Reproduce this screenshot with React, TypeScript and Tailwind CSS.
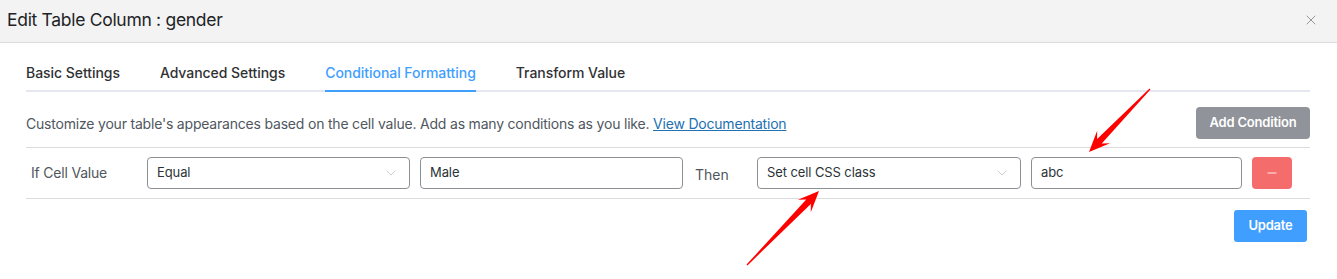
import { X, ChevronDown, Minus } from "lucide-react";

const tabs = ["Basic Settings", "Advanced Settings", "Conditional Formatting", "Transform Value"];

function arrowPoints(tail: [number, number], tip: [number, number]) {
  const dx = tip[0] - tail[0];
  const dy = tip[1] - tail[1];
  const len = Math.hypot(dx, dy);
  const ux = dx / len;
  const uy = dy / len;
  const nx = -uy;
  const ny = ux;
  const at = (d: number, w: number) => `${tip[0] - ux * d + nx * w},${tip[1] - uy * d + ny * w}`;
  return [
    at(len, 0.6),
    at(15, 3.2),
    at(21, 9),
    `${tip[0]},${tip[1]}`,
    at(21, -9),
    at(15, -3.2),
    at(len, -0.6),
  ].join(" ");
}

function SelectBox({ value, width }: { value: string; width: string }) {
  return (
    <div
      className={`flex h-[32px] ${width} items-center justify-between rounded-[4px] border border-[#8c8f94] bg-white pl-[9px] pr-[10px] text-[13px] tracking-[-0.1px] text-[#2c3338]`}
    >
      <span>{value}</span>
      <ChevronDown className="h-4 w-4 text-[#c0c4cc]" strokeWidth={1.25} />
    </div>
  );
}

function TextBox({ value, width }: { value: string; width: string }) {
  return (
    <div
      className={`flex h-[32px] ${width} items-center rounded-[4px] border border-[#8c8f94] bg-white px-[9px] text-[13px] tracking-[-0.1px] text-[#2c3338]`}
    >
      {value}
    </div>
  );
}

export default function App() {
  return (
    <div
      className="relative h-[279px] w-[1337px] overflow-hidden bg-white"
      style={{ fontFamily: "Inter, 'Liberation Sans', sans-serif" }}
    >
      <div className="flex h-[43px] items-center justify-between border-b border-[#dcdcde] bg-[#f3f3f3] pb-[2px] pl-[7px] pr-[18px]">
        <h1 className="text-[17.5px] font-normal tracking-[-0.3px] text-[#1d2327]">Edit Table Column : gender</h1>
        <X className="h-[16px] w-[16px] text-[#8c8f94]" strokeWidth={1.4} />
      </div>

      <div className="pl-[26px] pr-[27px]">
        <div className="mt-[13px] flex gap-[40px] border-b-2 border-[#e4e7ed]">
          {tabs.map((t, i) => (
            <div
              key={t}
              className={`-mb-[2px] flex h-[36px] items-center border-b-2 pb-[1px] text-[14px] font-medium tracking-[-0.05px] ${
                i === 2 ? "border-[#409eff] text-[#409eff]" : "border-transparent text-[#303133]"
              }`}
            >
              {t}
            </div>
          ))}
        </div>

        <div className="mt-[15px] flex items-center justify-between">
          <p className="text-[14px] tracking-[-0.2px] text-[#50575e]">
            Customize your table's appearances based on the cell value. Add as many conditions as you like.{" "}
            <a className="text-[#2271b1] underline">View Documentation</a>
          </p>
          <button className="h-[32px] w-[114px] rounded-[4px] bg-[#909399] text-[13px] font-semibold tracking-[-0.2px] text-white">
            Add Condition
          </button>
        </div>

        <div className="mt-[8px] flex h-[52px] items-center border-y border-[#dcdcde] pb-[1px] pl-[5px]">
          <span className="w-[116px] text-[14px] tracking-[-0.2px] text-[#50575e]">If Cell Value</span>
          <SelectBox value="Equal" width="w-[263px]" />
          <div className="ml-[10px]">
            <TextBox value="Male" width="w-[263px]" />
          </div>
          <span className="ml-[12px] w-[62px] pt-[4px] text-[14px] text-[#50575e]">Then</span>
          <SelectBox value="Set cell CSS class" width="w-[264px]" />
          <div className="ml-[10px]">
            <TextBox value="abc" width="w-[211px]" />
          </div>
          <button className="ml-[10px] flex h-[32px] w-[40px] items-center justify-center rounded-[4px] bg-[#f56c6c] text-white">
            <Minus className="h-[14px] w-[14px]" strokeWidth={1.5} />
          </button>
        </div>

        <div className="mt-[11px] flex justify-end pr-[3px]">
          <button className="h-[32px] w-[73px] rounded-[3px] bg-[#409eff] text-[13px] font-semibold tracking-[-0.2px] text-white">
            Update
          </button>
        </div>
      </div>

      <svg className="pointer-events-none absolute inset-0" width="1337" height="279">
        <polygon points={arrowPoints([1150, 89], [1089, 152])} fill="#ff0000" />
        <polygon points={arrowPoints([747, 265], [819, 191])} fill="#ff0000" />
      </svg>
    </div>
  );
}
